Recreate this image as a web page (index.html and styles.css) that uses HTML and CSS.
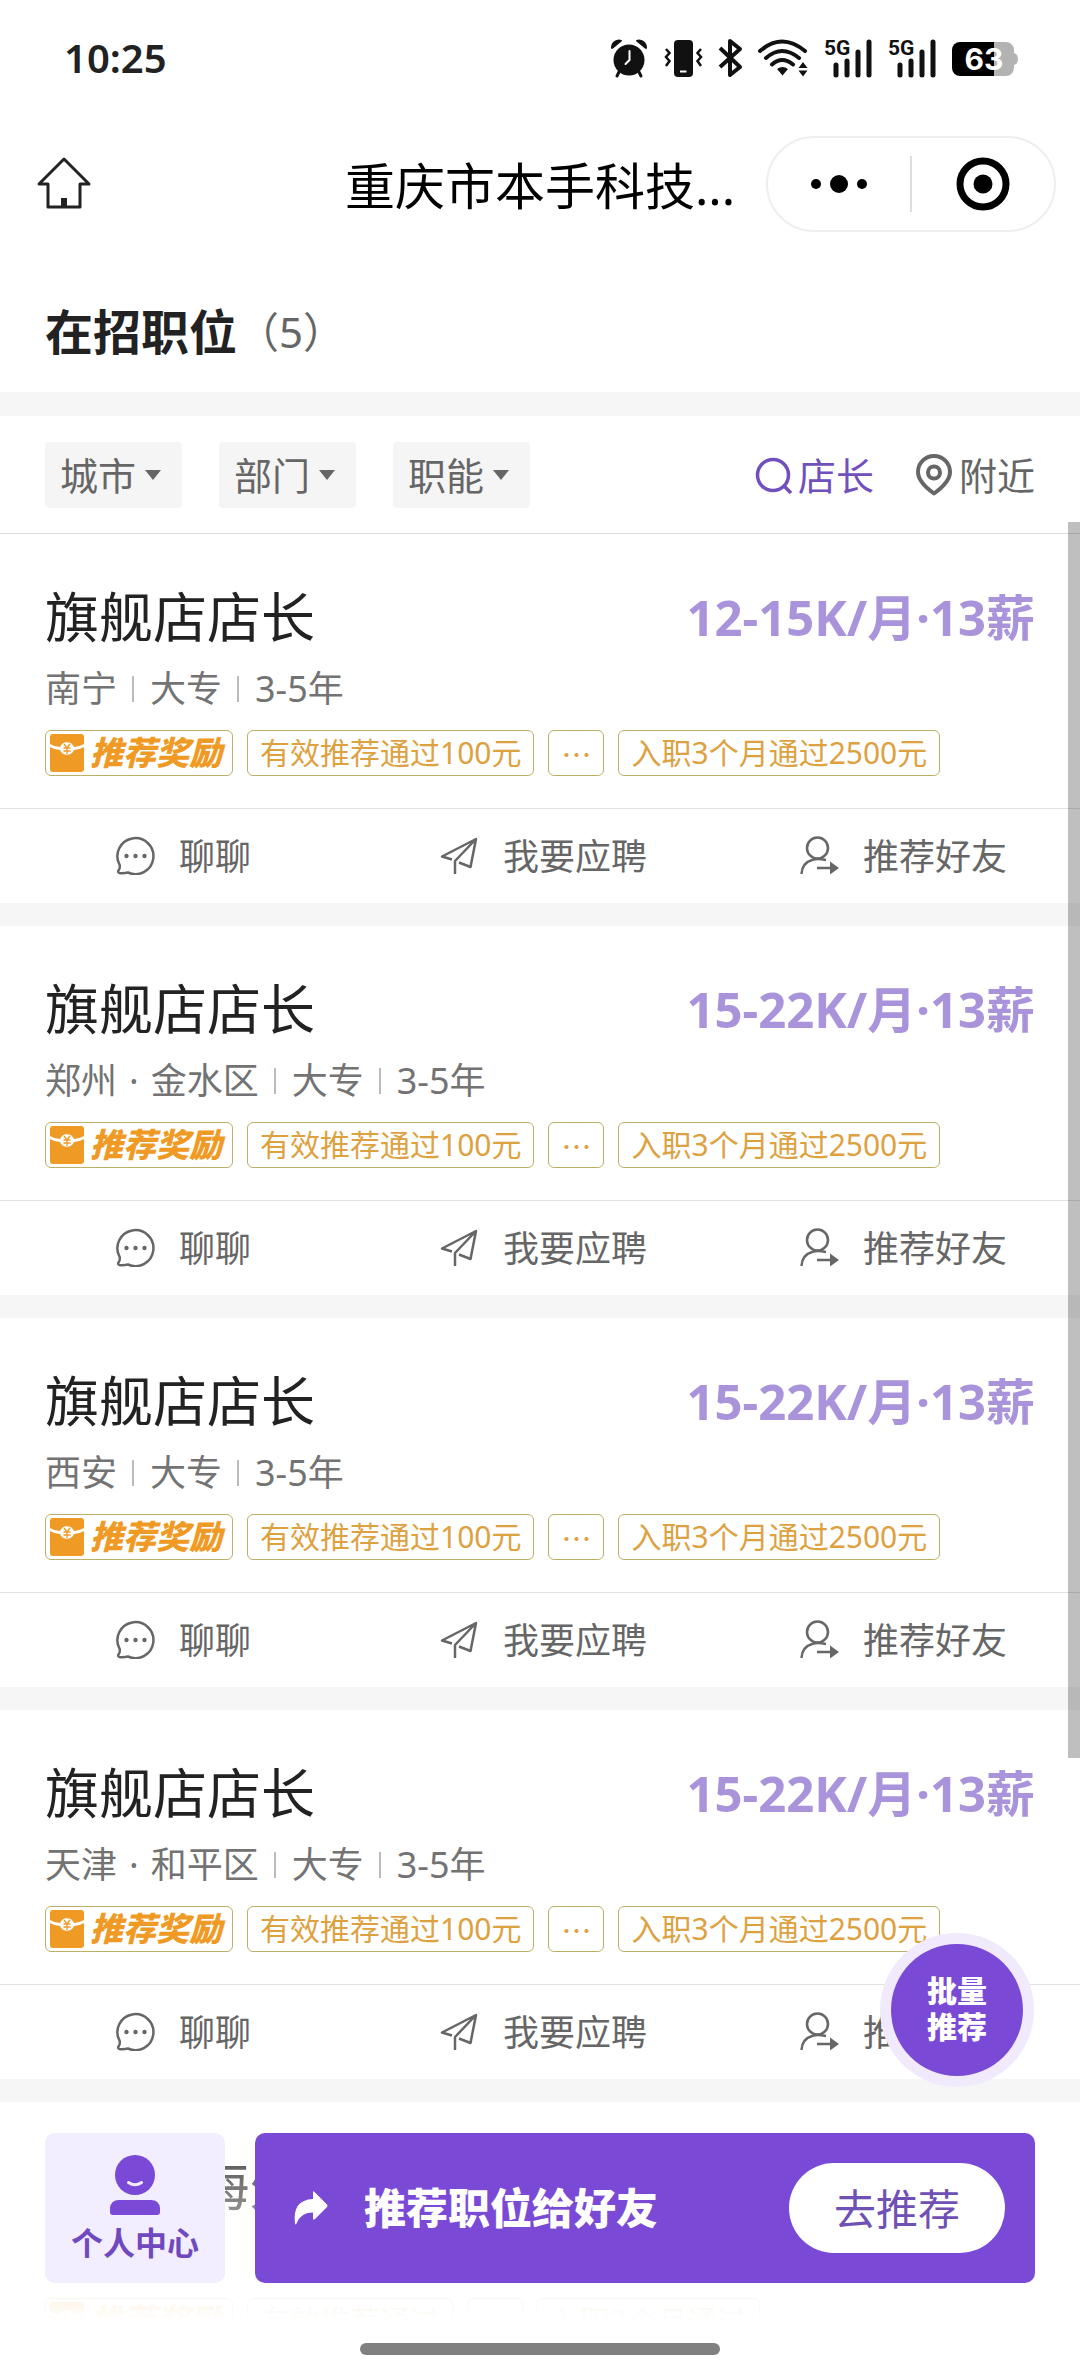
FILE: index.html
```html
<!DOCTYPE html>
<html lang="zh-CN">
<head>
<meta charset="utf-8">
<meta name="viewport" content="width=device-width, initial-scale=1">
<title>在招职位</title>
<link rel="stylesheet" href="styles.css">
</head>
<body>
<svg class="sprite" aria-hidden="true">
  <symbol id="i-gift" viewBox="0 0 34 38">
    <path d="M3 0h28a3 3 0 0 1 3 3v7q-5 3-10 3a7.500 7.500 0 0 0-14 0q-5 0-10-3V3a3 3 0 0 1 3-3z" fill="#f09a26"/>
    <path d="M0 13q5 3 10 3a7.500 7.500 0 0 0 14 0q5 0 10-3v22a3 3 0 0 1-3 3H3a3 3 0 0 1-3-3z" fill="#f09a26"/>
    <path d="M14 10l3 4 3-4M13.500 14h7M13.500 17h7M17 14v6" fill="none" stroke="#f09a26" stroke-width="1.300"/>
  </symbol>
  <symbol id="i-chat" viewBox="0 0 40 40">
    <path d="M4.500 29.500A18 18 0 1 1 13 37.500q-4.500 1-8.500.500-2-.500-1-2.500Q5.500 32.500 4.500 29.500z" fill="none" stroke="#666" stroke-width="2.500" stroke-linejoin="round"/>
    <circle cx="11.500" cy="21" r="2.200" fill="#666"/><circle cx="20.500" cy="21" r="2.200" fill="#666"/><circle cx="29.500" cy="21" r="2.200" fill="#666"/>
  </symbol>
  <symbol id="i-send" viewBox="0 0 40 40">
    <path d="M13 24.500L3 21.500 37 4 31.500 32 20 27.500M37 4L16 26v13" fill="none" stroke="#666" stroke-width="2.500" stroke-linejoin="round"/>
  </symbol>
  <symbol id="i-friend" viewBox="0 0 40 40">
    <circle cx="18.500" cy="13" r="10.500" fill="none" stroke="#666" stroke-width="2.500"/>
    <path d="M2.500 39Q3 28 13 25q5-2 14 0M18 33h15" fill="none" stroke="#666" stroke-width="2.500"/>
    <path d="M31 26.500l9 6.500-9 6.500z" fill="#666"/>
  </symbol>
</svg>

<div class="app">
  <div class="status-bar">
    <time class="clock">10:25</time>
    <div class="status-icons">
      <svg width="38" height="38" viewBox="0 0 38 38" aria-hidden="true">
        <path d="M1 9a8 8 0 0 1 10.500-8q1 0 0 1.500L3 9.500Q1.500 10.500 1 9zM37 9a8 8 0 0 0-10.500-8q-1 0 0 1.500L35 9.500q1.500 1 2-.500z" fill="#111"/>
        <path d="M9 33l-2 4M29 33l2 4" stroke="#111" stroke-width="3" stroke-linecap="round"/>
        <circle cx="19" cy="21" r="15.500" fill="#111"/>
        <path d="M19.500 12v9l-4 4" fill="none" stroke="#fff" stroke-width="2" stroke-linecap="round"/>
      </svg>
      <svg width="38" height="38" viewBox="0 0 38 38" aria-hidden="true">
        <rect x="10" y="1" width="19" height="37" rx="4" fill="#111"/>
        <path d="M16 32.500h6.500" stroke="#fff" stroke-width="2"/>
        <path d="M2 10l3.500 4-3.500 4 3.500 4-3.500 5M37 10l-3.500 4 3.500 4-3.500 4 3.500 5" fill="none" stroke="#111" stroke-width="2.500"/>
      </svg>
      <svg width="24" height="38" viewBox="0 0 24 38" aria-hidden="true">
        <path d="M2 9l20 19-10 8V2l10 8L2 28" fill="none" stroke="#111" stroke-width="4" stroke-linejoin="round"/>
      </svg>
      <svg width="50" height="38" viewBox="0 0 50 38" aria-hidden="true">
        <path d="M2 12q22-19 45 0M8 19q16-14 33 0M14 25.500q10-9 21 0" fill="none" stroke="#111" stroke-width="4" stroke-linecap="round"/>
        <path d="M19 30q5.500-4 11 0l-5.500 6.500zM40.500 29l4.500-6 4.500 6zM40.500 31.500l4.500 6 4.500-6z" fill="#111"/>
      </svg>
      <svg width="48" height="38" viewBox="0 0 48 38" aria-label="5G">
        <text x="0" y="16" class="net-label">5G</text>
        <path d="M12 26v10M23 22v14M34 13v23M45 3v33" fill="none" stroke="#111" stroke-width="5" stroke-linecap="round"/>
      </svg>
      <svg width="48" height="38" viewBox="0 0 48 38" aria-label="5G">
        <text x="0" y="16" class="net-label">5G</text>
        <path d="M12 26v10M23 22v14M34 13v23M45 3v33" fill="none" stroke="#111" stroke-width="5" stroke-linecap="round"/>
      </svg>
      <svg width="66" height="38" viewBox="0 0 66 38" aria-label="电量63%">
        <path d="M42 3h12a8 8 0 0 1 8 8v3q4 1 4 6t-4 6v3a8 8 0 0 1-8 8H42z" fill="#b3b3b3"/>
        <path d="M42 3H8a8 8 0 0 0-8 8v18a8 8 0 0 0 8 8h34z" fill="#000"/>
        <text x="32" y="31" text-anchor="middle" class="battery-label">63</text>
      </svg>
    </div>
  </div>

  <header class="nav">
    <button class="home" aria-label="首页">
      <svg width="54" height="54" viewBox="0 0 54 54" aria-hidden="true">
        <path d="M27 2L2 27h9v23h32V27h9z" fill="none" stroke="#222" stroke-width="3" stroke-linejoin="round"/>
        <path d="M24 41h6v9h-6z" fill="#222"/>
      </svg>
    </button>
    <h1 class="nav-title">重庆市本手科技...</h1>
    <div class="capsule">
      <button class="capsule-btn" aria-label="更多">
        <svg width="60" height="20" viewBox="0 0 60 20" aria-hidden="true"><circle cx="7" cy="10" r="5"/><circle cx="30" cy="10" r="9"/><circle cx="53" cy="10" r="5"/></svg>
      </button>
      <button class="capsule-btn" aria-label="关闭">
        <svg width="54" height="54" viewBox="0 0 54 54" aria-hidden="true"><circle cx="27" cy="27" r="23" fill="none" stroke="#000" stroke-width="7"/><circle cx="27" cy="27" r="9.500"/></svg>
      </button>
    </div>
  </header>

  <h2 class="section-title">在招职位<span class="count">（5）</span></h2>

  <div class="filters">
    <label class="chip"><select aria-label="城市"><option>城市</option></select><svg width="16" height="10" viewBox="0 0 16 10" aria-hidden="true"><path d="M0 0h16L8 10z"/></svg></label>
    <label class="chip"><select aria-label="部门"><option>部门</option></select><svg width="16" height="10" viewBox="0 0 16 10" aria-hidden="true"><path d="M0 0h16L8 10z"/></svg></label>
    <label class="chip"><select aria-label="职能"><option>职能</option></select><svg width="16" height="10" viewBox="0 0 16 10" aria-hidden="true"><path d="M0 0h16L8 10z"/></svg></label>
    <div class="filter-links">
      <button class="filter-link active">
        <svg width="40" height="42" viewBox="0 0 40 42" aria-hidden="true"><circle cx="20" cy="21" r="15.500" fill="none" stroke="currentColor" stroke-width="3.500"/><path d="M31 32l7 7" stroke="currentColor" stroke-width="3.500"/></svg>店长
      </button>
      <button class="filter-link">
        <svg width="40" height="42" viewBox="0 0 40 42" aria-hidden="true"><path d="M20 39.500Q4 28 4 18a16 16 0 0 1 32 0q0 10-16 21.500z" fill="none" stroke="currentColor" stroke-width="4" stroke-linejoin="round"/><circle cx="20" cy="18.500" r="6" fill="none" stroke="currentColor" stroke-width="4"/></svg>附近
      </button>
    </div>
  </div>

  <main class="jobs">
    <article class="job">
      <div class="job-body">
        <div class="job-head"><h3 class="job-title">旗舰店店长</h3><span class="salary">12-15K/月·13薪</span></div>
        <div class="meta"><span>南宁</span><span>大专</span><span>3-5年</span></div>
        <div class="tags"><span class="tag reward"><svg width="34" height="38" aria-hidden="true"><use href="#i-gift"/></svg>推荐奖励</span><span class="tag">有效推荐通过100元</span><span class="tag more">…</span><span class="tag">入职3个月通过2500元</span></div>
      </div>
      <div class="actions">
        <button><svg width="40" height="40" aria-hidden="true"><use href="#i-chat"/></svg>聊聊</button>
        <button><svg width="40" height="40" aria-hidden="true"><use href="#i-send"/></svg>我要应聘</button>
        <button><svg width="40" height="40" aria-hidden="true"><use href="#i-friend"/></svg>推荐好友</button>
      </div>
    </article>
    <article class="job">
      <div class="job-body">
        <div class="job-head"><h3 class="job-title">旗舰店店长</h3><span class="salary">15-22K/月·13薪</span></div>
        <div class="meta"><span>郑州<i class="dot">·</i>金水区</span><span>大专</span><span>3-5年</span></div>
        <div class="tags"><span class="tag reward"><svg width="34" height="38" aria-hidden="true"><use href="#i-gift"/></svg>推荐奖励</span><span class="tag">有效推荐通过100元</span><span class="tag more">…</span><span class="tag">入职3个月通过2500元</span></div>
      </div>
      <div class="actions">
        <button><svg width="40" height="40" aria-hidden="true"><use href="#i-chat"/></svg>聊聊</button>
        <button><svg width="40" height="40" aria-hidden="true"><use href="#i-send"/></svg>我要应聘</button>
        <button><svg width="40" height="40" aria-hidden="true"><use href="#i-friend"/></svg>推荐好友</button>
      </div>
    </article>
    <article class="job">
      <div class="job-body">
        <div class="job-head"><h3 class="job-title">旗舰店店长</h3><span class="salary">15-22K/月·13薪</span></div>
        <div class="meta"><span>西安</span><span>大专</span><span>3-5年</span></div>
        <div class="tags"><span class="tag reward"><svg width="34" height="38" aria-hidden="true"><use href="#i-gift"/></svg>推荐奖励</span><span class="tag">有效推荐通过100元</span><span class="tag more">…</span><span class="tag">入职3个月通过2500元</span></div>
      </div>
      <div class="actions">
        <button><svg width="40" height="40" aria-hidden="true"><use href="#i-chat"/></svg>聊聊</button>
        <button><svg width="40" height="40" aria-hidden="true"><use href="#i-send"/></svg>我要应聘</button>
        <button><svg width="40" height="40" aria-hidden="true"><use href="#i-friend"/></svg>推荐好友</button>
      </div>
    </article>
    <article class="job">
      <div class="job-body">
        <div class="job-head"><h3 class="job-title">旗舰店店长</h3><span class="salary">15-22K/月·13薪</span></div>
        <div class="meta"><span>天津<i class="dot">·</i>和平区</span><span>大专</span><span>3-5年</span></div>
        <div class="tags"><span class="tag reward"><svg width="34" height="38" aria-hidden="true"><use href="#i-gift"/></svg>推荐奖励</span><span class="tag">有效推荐通过100元</span><span class="tag more">…</span><span class="tag">入职3个月通过2500元</span></div>
      </div>
      <div class="actions">
        <button><svg width="40" height="40" aria-hidden="true"><use href="#i-chat"/></svg>聊聊</button>
        <button><svg width="40" height="40" aria-hidden="true"><use href="#i-send"/></svg>我要应聘</button>
        <button><svg width="40" height="40" aria-hidden="true"><use href="#i-friend"/></svg>推荐好友</button>
      </div>
    </article>
    <article class="job">
      <div class="job-body">
        <div class="job-head"><h3 class="job-title">运营 · 海外</h3></div>
        <div class="meta"><span>上海</span><span>大专</span></div>
        <div class="tags"><span class="tag reward"><svg width="34" height="38" aria-hidden="true"><use href="#i-gift"/></svg>推荐奖励</span><span class="tag">有效推荐通过</span><span class="tag more">…</span><span class="tag">入职3个月通过</span></div>
      </div>
    </article>
  </main>

  <div class="scroll-thumb"></div>
  <button class="fab">批量<br>推荐</button>

  <footer class="dock">
    <div class="dock-row">
      <button class="profile">
        <svg width="52" height="62" viewBox="0 0 52 62" aria-hidden="true">
          <circle cx="26" cy="20" r="20" fill="#7a49d6"/>
          <path d="M19.500 27.500q6.500 4.500 13 0" fill="none" stroke="#f2edff" stroke-width="3" stroke-linecap="round"/>
          <path d="M1 57v-4q1-8 9-8h32q8 0 9 8v4q0 3-3 3H4q-3 0-3-3z" fill="#7a49d6"/>
        </svg>
        个人中心
      </button>
      <div class="refer">
        <svg width="34" height="34" viewBox="0 0 34 34" aria-hidden="true"><path d="M19 1.500q0-2 1.500-.500L33 13.500q1 1 0 2.500L21 28q-2 1.500-2-.500v-6Q7 21 2.500 32.500q-1 2-1.500 0Q-2 9 19 8z" fill="#fff"/></svg>
        <span class="refer-text">推荐职位给好友</span>
        <button class="refer-btn">去推荐</button>
      </div>
    </div>
    <div class="home-indicator"></div>
  </footer>
</div>
</body>
</html>
```
FILE: styles.css
```css
* { box-sizing: border-box; }

body {
  margin: 0;
  background: #fff;
  color: #222;
  font-family: "Noto Sans", "Noto Sans CJK SC", sans-serif;
}

h1, h2, h3 { margin: 0; font-weight: 400; }

button, select {
  margin: 0;
  padding: 0;
  border: 0;
  background: none;
  color: inherit;
  font: inherit;
}

svg { display: block; flex: none; overflow: visible; }

.sprite { display: none; }

.app {
  position: relative;
  display: flex;
  flex-direction: column;
  height: 100vh;
  overflow: hidden;
}

/* System status bar */
.status-bar {
  display: flex;
  flex: none;
  align-items: center;
  justify-content: space-between;
  height: 116px;
  padding: 0 62px 0 64px;
}

.clock { font-size: 40px; font-weight: 600; line-height: 48px; }

.status-icons { display: flex; gap: 16px; }

.net-label { font: 700 21px "Roboto", sans-serif; fill: #111; }

.battery-label { font: 700 30px "Inter", sans-serif; fill: #fff; }

/* Mini-program navigation */
.nav {
  display: grid;
  flex: none;
  grid-template-columns: 1fr auto 1fr;
  align-items: center;
  height: 136px;
  padding: 0 24px;
}

.home { justify-self: start; padding-left: 13px; }

.nav-title { padding-top: 4px; color: #000; font-size: 50px; line-height: 60px; }

.capsule {
  display: flex;
  justify-self: end;
  width: 290px;
  height: 96px;
  padding: 18px 0;
  border: 2px solid #eee;
  border-radius: 48px;
}

.capsule-btn {
  display: flex;
  flex: 1;
  align-items: center;
  justify-content: center;
}

.capsule-btn + .capsule-btn { border-left: 2px solid #ddd; }

.section-title {
  display: flex;
  flex: none;
  align-items: center;
  height: 164px;
  padding: 20px 45px 0;
  border-bottom: 24px solid #f6f6f6;
  font-size: 48px;
  font-weight: 700;
  line-height: 60px;
}

.count { color: #666; font-size: 42px; font-weight: 400; }

/* Filters */
.filters {
  display: flex;
  flex: none;
  align-items: center;
  height: 118px;
  gap: 37px;
  padding: 0 45px;
  border-bottom: 1px solid #ddd;
  color: #666;
  font-size: 38px;
  line-height: 48px;
}

.chip {
  display: grid;
  align-items: center;
  border-radius: 4px;
  background: #f5f5f5;
}

.chip select {
  grid-area: 1 / 1;
  width: 137px;
  height: 66px;
  padding: 0 15px;
  appearance: none;
}

.chip svg {
  grid-area: 1 / 1;
  justify-self: end;
  margin-right: 21px;
  fill: #666;
  pointer-events: none;
}

.filter-links { display: flex; gap: 40px; margin-left: auto; }

.filter-link { display: flex; align-items: center; gap: 5px; }

.filter-link.active { color: #7150bd; }

/* Job cards */
.jobs {
  flex: 1;
  min-height: 0;
  overflow: hidden auto;
  scrollbar-width: none;
}

.job { border-bottom: 23px solid #f6f6f6; }

.job-body { padding: 51px 45px 32px; border-bottom: 1px solid #e2e2e2; }

.job-head { display: flex; align-items: center; justify-content: space-between; }

.job-title { font-size: 54px; line-height: 64px; }

.salary { color: #a993da; font-size: 49px; font-weight: 700; line-height: 64px; }

.meta {
  display: flex;
  align-items: center;
  margin: 20px 0 21px;
  color: #737373;
  font-size: 36px;
  line-height: 40px;
}

.meta span + span { display: flex; align-items: center; }

.meta span + span::before {
  width: 2px;
  height: 26px;
  margin: 0 16px 0 15px;
  background: #bbb;
  content: "";
}

.dot { padding: 0 12px; font-style: normal; }

.tags { display: flex; gap: 14px; }

.tag {
  display: flex;
  align-items: center;
  height: 46px;
  padding: 0 12px;
  border: 1px solid #bdae68;
  border-radius: 6px;
  color: #dda23f;
  font-size: 30px;
  line-height: 44px;
}

.tag.more { font-family: "Noto Sans CJK SC", sans-serif; }

.tag.reward {
  gap: 6px;
  padding: 0 10px 0 4px;
  color: #f09a26;
  font-size: 33px;
  font-style: italic;
  font-weight: 900;
}

.actions {
  display: grid;
  grid-template-columns: repeat(3, 1fr);
  column-gap: 6px;
  height: 94px;
  padding: 0 0 3px 6px;
  color: #666;
  font-size: 36px;
}

.actions button {
  display: flex;
  align-items: center;
  justify-content: center;
  gap: 24px;
}

/* Overlays */
.scroll-thumb {
  position: absolute;
  top: 522px;
  right: 0;
  width: 12px;
  height: 52vh;
  background: rgba(0, 0, 0, .25);
}

.fab {
  position: absolute;
  right: 57px;
  bottom: 300px;
  width: 132px;
  height: 132px;
  padding-bottom: 3px;
  border-radius: 50%;
  background: #7a49d6;
  box-shadow: 0 0 0 11px #f0eafc;
  color: #fff;
  font-size: 30px;
  font-weight: 800;
  line-height: 36px;
}

.dock {
  position: absolute;
  right: 0;
  bottom: 0;
  left: 0;
  padding: 31px 45px 21px;
  background: linear-gradient(rgba(255, 255, 255, 0), #fff 80%);
}

.dock-row { display: flex; gap: 30px; height: 150px; margin-bottom: 60px; }

.profile {
  display: flex;
  flex-direction: column;
  align-items: center;
  gap: 2px;
  width: 180px;
  padding-top: 22px;
  border-radius: 10px;
  background: #f2edff;
  color: #6f49bd;
  font-size: 32px;
  font-weight: 700;
  line-height: 48px;
}

.refer {
  display: flex;
  flex: 1;
  align-items: center;
  padding: 0 30px 0 39px;
  border-radius: 10px;
  background: #7a49d6;
}

.refer-text {
  margin: 0 auto 0 36px;
  color: #fff;
  font-size: 42px;
  font-weight: 800;
  line-height: 60px;
}

.refer-btn {
  width: 216px;
  height: 90px;
  padding-bottom: 3px;
  border-radius: 45px;
  background: #fff;
  color: #6f50b5;
  font-size: 42px;
}

.home-indicator {
  width: 360px;
  height: 12px;
  margin: 0 auto;
  border-radius: 6px;
  background: #808080;
}
```
